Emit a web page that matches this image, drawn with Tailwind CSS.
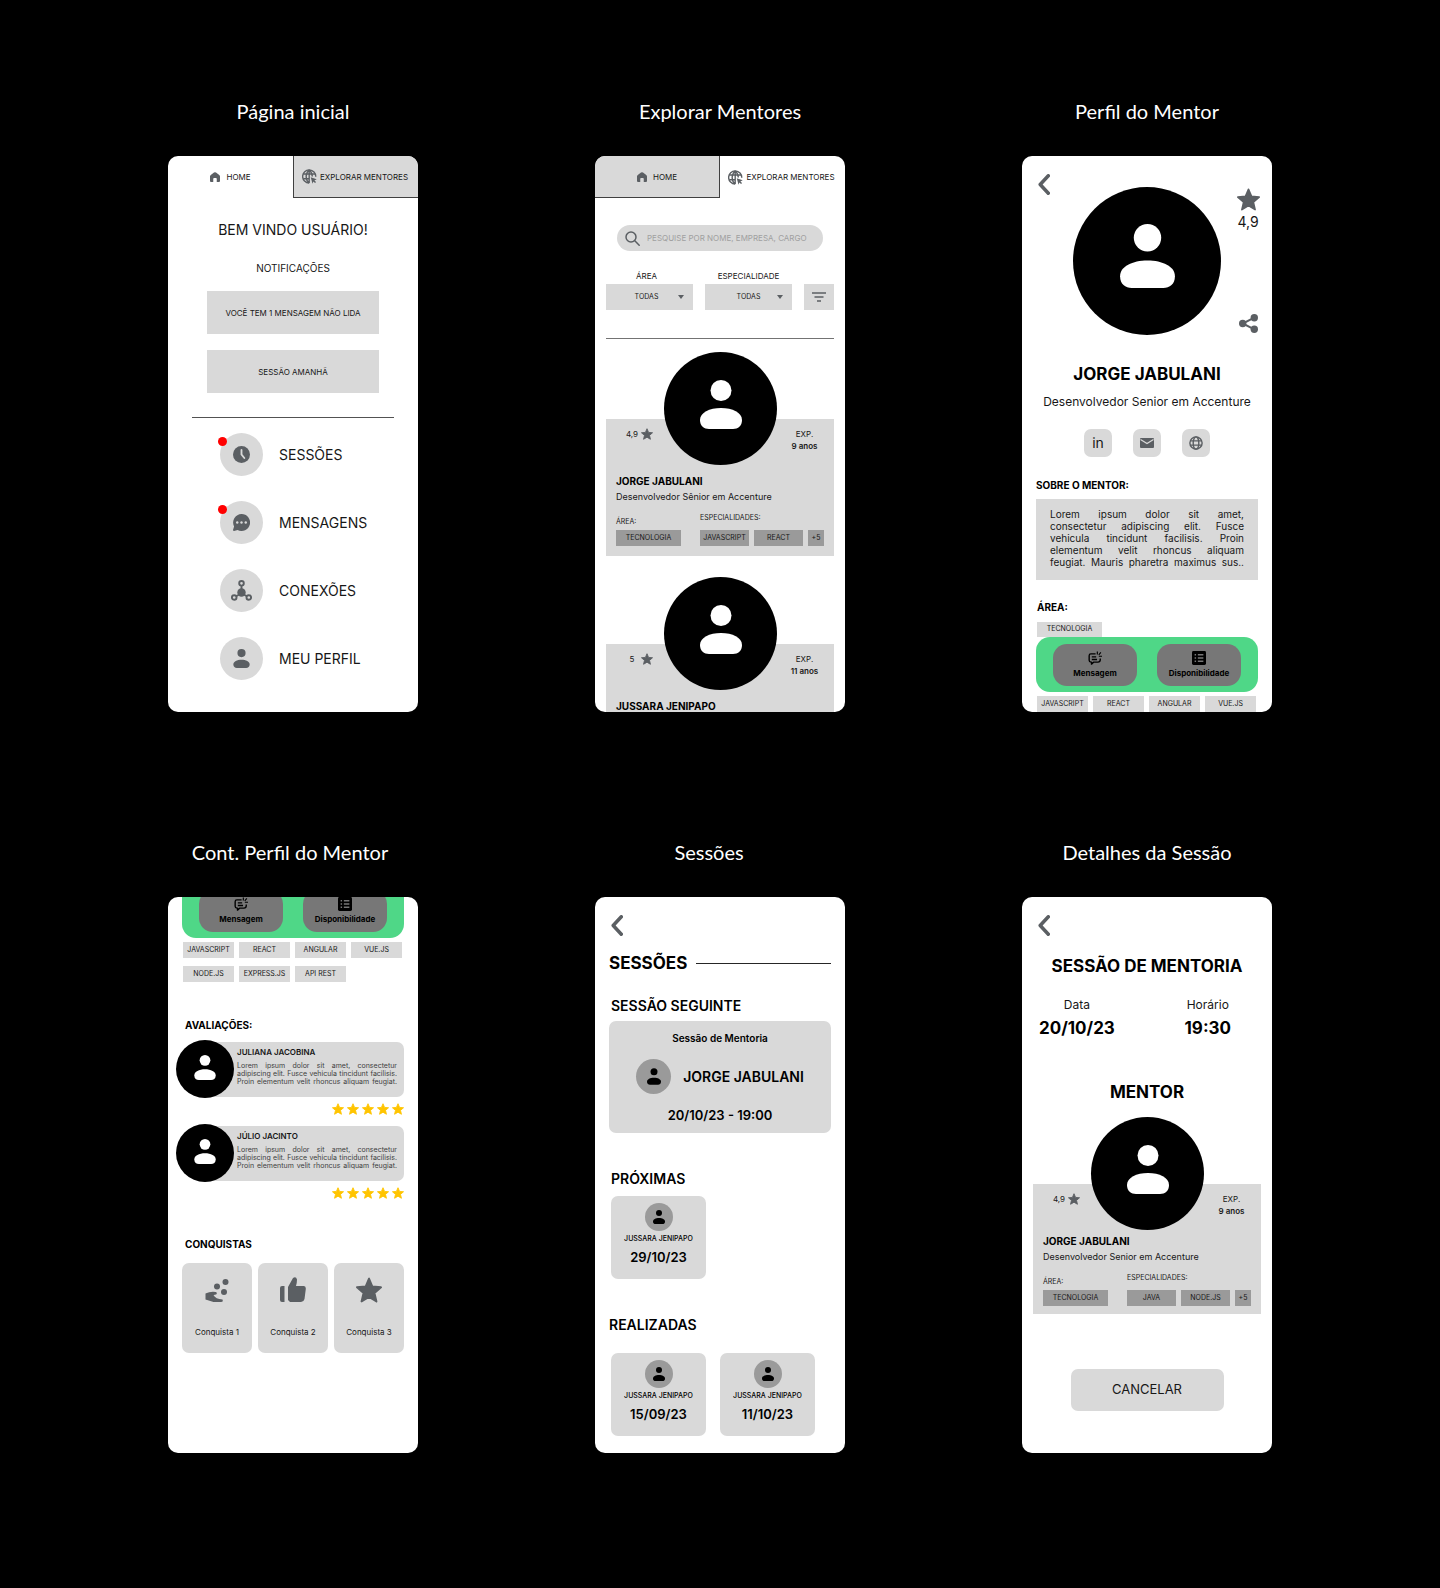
<!DOCTYPE html>
<html lang="pt-BR">
<head>
<meta charset="utf-8">
<meta name="viewport" content="width=device-width, initial-scale=1">
<title>Mentoria – Wireframes</title>
<script src="https://cdn.jsdelivr.net/npm/@tailwindcss/browser@4"></script>
</head>
<body class="bg-black font-['Inter',sans-serif] text-[8px] text-neutral-900">

<!-- Shared icons -->
<svg class="hidden" aria-hidden="true">
  <symbol id="person" viewBox="0 0 42 49"><circle cx="21" cy="10.5" r="10.5"/><path d="M0 40C0 32.5 9.5 28 21 28s21 4.500 21 12c0 6-4 9-9 9H9c-5 0-9-3-9-9z"/></symbol>
  <symbol id="star" viewBox="1.200 1.200 21.600 20.600"><path stroke="currentColor" stroke-width="1.600" stroke-linejoin="round" d="M12 17.270L18.180 21l-1.640-7.030L22 9.240l-7.190-.610L12 2 9.190 8.630 2 9.240l5.460 4.730L5.820 21z"/></symbol>
  <symbol id="chevron" viewBox="0 0 12 21"><path fill="none" stroke="currentColor" stroke-width="3.500" stroke-linecap="round" stroke-linejoin="round" d="M10.300 1.800L2.200 10.500l8.100 8.700"/></symbol>
  <symbol id="home" viewBox="0 0 20 20"><path d="M0 9Q0 7 1.500 6L8 1q2-1.500 4 0l6.500 5Q20 7 20 9v9q0 2-2 2h-4.500v-6q0-2-1.500-2H8q-1.500 0-1.500 2v6H2q-2 0-2-2z"/></symbol>
  <symbol id="globe-cursor" viewBox="0 0 24 24"><g fill="none" stroke="currentColor" stroke-width="2.200"><path d="M22 12.500A10.500 10.500 0 1 0 11.500 22.500"/><path d="M11.500 1.500C5 7 5 17 11.500 22.500M11.500 1.500c3.500 3 5 6.500 5 10.500M11.500 1.500v21M2 8h19M2 15.500h10"/></g><path d="M14 13l9.500 3.500-3.700 1.700 2.700 2.700-1.600 1.600-2.700-2.700-1.400 3.700z"/></symbol>
  <symbol id="globe" viewBox="0 0 24 24"><g fill="none" stroke="currentColor" stroke-width="2.400"><circle cx="12" cy="12" r="10.500"/><ellipse cx="12" cy="12" rx="4.800" ry="10.500"/><path d="M2 8.300h20M2 15.700h20"/></g></symbol>
  <symbol id="message" viewBox="0 0 24 24"><path fill="none" stroke="currentColor" stroke-width="2.400" stroke-linejoin="round" d="M13 5H5Q2 5 2 8v8q0 3 3 3h1v3.500L10 19h7q4 0 4-4v-2M6.500 10H14M6.500 14.500h9"/><path fill="none" stroke="currentColor" stroke-width="2" d="M16 6V1M18.500 6.500L22 2.500M18.500 9H24"/></symbol>
  <symbol id="list" viewBox="0 0 24 24"><rect width="24" height="24" rx="2.500"/><path stroke="#777" stroke-width="2.400" fill="none" d="M4.500 6.500H7M10 6.500h9.500M4.500 12H7M10 12h9.500M4.500 17.500H7M10 17.500h9.500"/></symbol>
</svg>

<main class="mx-auto grid max-w-[1281px] grid-cols-1 gap-y-[124px] pt-[95px] pb-[135px] md:grid-cols-2 lg:grid-cols-3">

  <!-- Página inicial -->
  <section class="flex flex-col items-center">
    <h1 class="font-['Lato',sans-serif] text-xl leading-8 text-white">Página inicial</h1>
    <div class="mt-[29px] flex h-[556px] w-[250px] flex-col overflow-hidden rounded-[10px] bg-white">
      <nav class="grid h-[42px] shrink-0 grid-cols-2">
        <a href="#" class="flex items-center justify-center gap-[6px]"><svg class="size-[10px] fill-[#5b5f63]"><use href="#home"/></svg>HOME</a>
        <a href="#" class="flex items-center justify-center gap-[3px] border-b border-l border-neutral-700 bg-[#d9d9d9] pr-[2px]"><svg class="size-[15px] fill-[#5b5f63] text-[#5b5f63]"><use href="#globe-cursor"/></svg>EXPLORAR MENTORES</a>
      </nav>
      <h2 class="mt-[22px] text-center text-sm leading-5">BEM VINDO USUÁRIO!</h2>
      <h3 class="mt-[21px] text-center text-[10px] leading-[14px]">NOTIFICAÇÕES</h3>
      <ul class="mx-[39px] mt-4 flex flex-col gap-4">
        <li class="flex h-[43px] items-center justify-center bg-[#d9d9d9]">VOCÊ TEM 1 MENSAGEM NÃO LIDA</li>
        <li class="flex h-[43px] items-center justify-center bg-[#d9d9d9]">SESSÃO AMANHÃ</li>
      </ul>
      <hr class="mx-6 mt-6 border-neutral-600">
      <ul class="mt-[15px] ml-[52px] flex flex-col gap-[25px] text-sm">
        <li><a href="#" class="flex items-center gap-4">
          <span class="relative flex size-[43px] items-center justify-center rounded-full bg-[#d9d9d9]">
            <svg viewBox="0 0 24 24" class="size-[17px]"><circle cx="12" cy="12" r="12" fill="#5b5f63"/><path d="M12 5.500V12l4 5" fill="none" stroke="#d9d9d9" stroke-width="2.600" stroke-linecap="round"/></svg>
            <span class="absolute top-1 -left-[2px] size-[9px] rounded-full bg-[#ff0000]"></span>
          </span>SESSÕES</a></li>
        <li><a href="#" class="flex items-center gap-4">
          <span class="relative flex size-[43px] items-center justify-center rounded-full bg-[#d9d9d9]">
            <svg viewBox="0 0 24 24" class="size-[17px]"><path fill="#5b5f63" d="M12 0a12 12 0 1 1-5.500 22.600L1.500 24Q0 24 0 22.500l1.500-5A12 12 0 0 1 12 0z"/><g fill="#d9d9d9"><circle cx="6" cy="12" r="1.700"/><circle cx="12" cy="12" r="1.700"/><circle cx="18" cy="12" r="1.700"/></g></svg>
            <span class="absolute top-1 -left-[2px] size-[9px] rounded-full bg-[#ff0000]"></span>
          </span>MENSAGENS</a></li>
        <li><a href="#" class="flex items-center gap-4">
          <span class="flex size-[43px] items-center justify-center rounded-full bg-[#d9d9d9]">
            <svg viewBox="0 0 21 21" class="size-[21px]"><circle cx="10.500" cy="12.500" r="4.200" fill="#5b5f63"/><g fill="none" stroke="#5b5f63" stroke-width="1.900"><circle cx="10.500" cy="3.300" r="2.300"/><circle cx="3.200" cy="17.500" r="2.300"/><circle cx="17.800" cy="17.500" r="2.300"/><path d="M10.500 5.500V10M5.200 16.300l3-1.800M15.800 16.300l-3-1.800"/></g></svg>
          </span>CONEXÕES</a></li>
        <li><a href="#" class="flex items-center gap-4">
          <span class="flex size-[43px] items-center justify-center rounded-full bg-[#d9d9d9]">
            <svg class="h-[19px] w-[17px] fill-[#5b5f63]"><use href="#person"/></svg>
          </span>MEU PERFIL</a></li>
      </ul>
    </div>
  </section>

  <!-- Explorar mentores -->
  <section class="flex flex-col items-center">
    <h1 class="font-['Lato',sans-serif] text-xl leading-8 text-white">Explorar Mentores</h1>
    <div class="mt-[29px] flex h-[556px] w-[250px] flex-col overflow-hidden rounded-[10px] bg-white">
      <nav class="grid h-[42px] shrink-0 grid-cols-2">
        <a href="#" class="flex items-center justify-center gap-[6px] border-r border-b border-neutral-700 bg-[#d9d9d9]"><svg class="size-[10px] fill-[#5b5f63]"><use href="#home"/></svg>HOME</a>
        <a href="#" class="flex items-center justify-center gap-[3px] pr-[2px]"><svg class="size-[15px] fill-[#5b5f63] text-[#5b5f63]"><use href="#globe-cursor"/></svg>EXPLORAR MENTORES</a>
      </nav>
      <label class="mx-[22px] mt-[27px] flex h-[26px] shrink-0 items-center gap-[7px] rounded-full bg-[#d9d9d9] pr-2 pl-2">
        <svg viewBox="0 0 15 15" class="size-[15px] shrink-0" fill="none" stroke="#5b5f63" stroke-width="1.500" stroke-linecap="round"><circle cx="6" cy="6" r="5"/><path d="M9.800 9.800l4.400 4.400"/></svg>
        <input type="text" aria-label="Pesquisar mentores" placeholder="PESQUISE POR NOME, EMPRESA, CARGO" class="w-full min-w-0 bg-transparent placeholder:text-[#a0a0a0]">
      </label>
      <form class="mx-[11px] mt-5 grid grid-cols-[87px_87px_30px] items-end gap-3">
        <div class="relative flex flex-col gap-[3px]">
          <label for="area" class="pr-[6px] text-center leading-[10px]">ÁREA</label>
          <select id="area" class="h-[26px] appearance-none bg-[#d9d9d9] pr-[6px] text-center text-[7px]"><option>TODAS</option></select>
          <svg viewBox="0 0 6 4" class="pointer-events-none absolute right-[9px] bottom-[11px] h-1 w-[6px] fill-[#5b5f63]"><path d="M0 0h6L3 4z"/></svg>
        </div>
        <div class="relative flex flex-col gap-[3px]">
          <label for="especialidade" class="text-center leading-[10px]">ESPECIALIDADE</label>
          <select id="especialidade" class="h-[26px] appearance-none bg-[#d9d9d9] text-center text-[7px]"><option>TODAS</option></select>
          <svg viewBox="0 0 6 4" class="pointer-events-none absolute right-[9px] bottom-[11px] h-1 w-[6px] fill-[#5b5f63]"><path d="M0 0h6L3 4z"/></svg>
        </div>
        <button type="button" aria-label="Filtrar" class="flex h-[26px] items-center justify-center bg-[#d9d9d9]"><svg viewBox="0 0 14 10" class="h-[10px] w-[14px]" stroke="#5b5f63" stroke-width="1.300"><path d="M0 1h14M2.500 5h9M5 9h4"/></svg></button>
      </form>
      <hr class="mx-[11px] mt-7 border-neutral-500">

      <article class="mx-[11px] mt-[80px] bg-[#d9d9d9] px-[10px] pb-[10px]">
        <div class="-mx-[10px] grid grid-cols-[58px_113px_57px] items-start">
          <p class="flex items-center justify-end gap-[2px] pt-[9px] pr-[11px] leading-3"><span class="w-[14px] text-center">4,9</span><svg class="size-3 fill-[#5b5f63] text-[#5b5f63]"><use href="#star"/></svg></p>
          <div class="-mt-[67px] flex size-[113px] items-center justify-center rounded-full bg-black pb-2"><svg class="h-[49px] w-[42px] fill-white"><use href="#person"/></svg></div>
          <p class="pt-[9px] pr-[2px] text-center leading-3">EXP.<br><b class="font-semibold">9 anos</b></p>
        </div>
        <h2 class="mt-[9px] text-[10px] leading-[14px] font-bold text-black">JORGE JABULANI</h2>
        <p class="mt-[2px] text-[9px] leading-[13px]">Desenvolvedor Sênior em Accenture</p>
        <div class="mt-[11px] flex items-end justify-between text-[7px] leading-[8px]">
          <div><h3>ÁREA:</h3><p class="mt-1 flex h-4 w-[65px] items-center justify-center bg-[#9a9a9a]">TECNOLOGIA</p></div>
          <div><h3>ESPECIALIDADES:</h3>
            <ul class="mt-2 flex gap-[5px]"><li class="flex h-4 w-[49px] items-center justify-center bg-[#9a9a9a]">JAVASCRIPT</li><li class="flex h-4 w-[49px] items-center justify-center bg-[#9a9a9a]">REACT</li><li class="flex h-4 w-4 items-center justify-center bg-[#9a9a9a]">+5</li></ul></div>
        </div>
      </article>

      <article class="mx-[11px] mt-[88px] bg-[#d9d9d9] px-[10px] pb-[10px]">
        <div class="-mx-[10px] grid grid-cols-[58px_113px_57px] items-start">
          <p class="flex items-center justify-end gap-[2px] pt-[9px] pr-[11px] leading-3"><span class="w-[14px] text-center">5</span><svg class="size-3 fill-[#5b5f63] text-[#5b5f63]"><use href="#star"/></svg></p>
          <div class="-mt-[67px] flex size-[113px] items-center justify-center rounded-full bg-black pb-2"><svg class="h-[49px] w-[42px] fill-white"><use href="#person"/></svg></div>
          <p class="pt-[9px] pr-[2px] text-center leading-3">EXP.<br><b class="font-semibold">11 anos</b></p>
        </div>
        <h2 class="mt-[9px] text-[10px] leading-[14px] font-bold text-black">JUSSARA JENIPAPO</h2>
      </article>
    </div>
  </section>

  <!-- Perfil do mentor -->
  <section class="flex flex-col items-center">
    <h1 class="font-['Lato',sans-serif] text-xl leading-8 text-white">Perfil do Mentor</h1>
    <div class="mt-[29px] flex h-[556px] w-[250px] flex-col overflow-hidden rounded-[10px] bg-white">
      <header class="grid grid-cols-[51px_148px_51px] text-[#5b5f63]">
        <button type="button" aria-label="Voltar" class="mt-[18px] ml-4 h-[21px] w-3"><svg class="h-[21px] w-3"><use href="#chevron"/></svg></button>
        <div class="mt-[31px] flex size-[148px] items-center justify-center rounded-full bg-black pb-[10px]"><svg class="h-[64px] w-[55px] fill-white"><use href="#person"/></svg></div>
        <div class="flex flex-col items-center pt-8 pb-[2px] pl-[3px]">
          <svg class="size-[23px] fill-[#5b5f63]"><use href="#star"/></svg>
          <p class="mt-[3px] text-sm leading-4 text-neutral-900">4,9</p>
          <button type="button" aria-label="Compartilhar" class="mt-auto"><svg viewBox="0 0 19 19" class="size-[19px] fill-[#5b5f63]" stroke="#5b5f63"><path stroke-width="2" fill="none" d="M15.300 3.700l-11.600 5.800 11.600 5.800"/><g stroke="none"><circle cx="15.300" cy="3.700" r="3.700"/><circle cx="3.700" cy="9.500" r="3.700"/><circle cx="15.300" cy="15.300" r="3.700"/></g></svg></button>
        </div>
      </header>
      <h2 class="mt-[29px] text-center text-[17px] leading-5 font-bold text-black">JORGE JABULANI</h2>
      <p class="mt-[10px] text-center text-xs leading-4">Desenvolvedor Senior em Accenture</p>
      <nav class="mt-[19px] flex justify-center gap-[21px]">
        <a href="#" aria-label="LinkedIn" class="flex size-7 items-center justify-center rounded-[7px] bg-[#d9d9d9] text-sm">in</a>
        <a href="#" aria-label="E-mail" class="flex size-7 items-center justify-center rounded-[7px] bg-[#d9d9d9]"><svg viewBox="0 0 14 10" class="h-[10px] w-[14px]"><rect width="14" height="10" rx="1" fill="#5b5f63"/><path d="M.5 1.500L7 5.500l6.500-4" fill="none" stroke="#d9d9d9" stroke-width="1.200"/></svg></a>
        <a href="#" aria-label="Site" class="flex size-7 items-center justify-center rounded-[7px] bg-[#d9d9d9] text-[#5b5f63]"><svg class="size-[14px]"><use href="#globe"/></svg></a>
      </nav>
      <h3 class="mt-[21px] ml-[14px] text-[10px] leading-[14px] font-bold text-black">SOBRE O MENTOR:</h3>
      <p class="mx-[14px] mt-[7px] bg-[#d9d9d9] px-[14px] pt-[9px] pb-3 text-justify text-[10px] leading-3 [text-align-last:justify]">Lorem ipsum dolor sit amet,<br>consectetur adipiscing elit. Fusce<br>vehicula tincidunt facilisis. Proin<br>elementum velit rhoncus aliquam<br>feugiat. Mauris pharetra maximus sus..</p>
      <h3 class="mt-5 ml-[15px] text-[10px] leading-[14px] font-bold text-black">ÁREA:</h3>
      <p class="mt-2 ml-[15px] flex h-[15px] w-[65px] shrink-0 items-center justify-center bg-[#d9d9d9] text-[7px]">TECNOLOGIA</p>
      <div class="mx-[14px] flex h-[55px] shrink-0 items-center justify-center gap-5 rounded-[14px] bg-[#4fd787] font-bold text-black">
        <button type="button" class="flex h-[42px] w-[84px] flex-col items-center gap-[3px] rounded-[14px] bg-[#777] pt-[7px] leading-[10px]"><svg class="size-[14px]"><use href="#message"/></svg>Mensagem</button>
        <button type="button" class="flex h-[42px] w-[84px] flex-col items-center gap-[3px] rounded-[14px] bg-[#777] pt-[7px] leading-[10px]"><svg class="size-[14px]"><use href="#list"/></svg>Disponibilidade</button>
      </div>
      <ul class="mx-[15px] mt-1 flex gap-[5px] text-[7px]">
        <li class="flex h-4 w-[51px] items-center justify-center bg-[#d9d9d9]">JAVASCRIPT</li>
        <li class="flex h-4 w-[51px] items-center justify-center bg-[#d9d9d9]">REACT</li>
        <li class="flex h-4 w-[51px] items-center justify-center bg-[#d9d9d9]">ANGULAR</li>
        <li class="flex h-4 w-[51px] items-center justify-center bg-[#d9d9d9]">VUE.JS</li>
      </ul>
    </div>
  </section>

  <!-- Continuação do perfil -->
  <section class="flex flex-col items-center">
    <h1 class="pr-[6px] font-['Lato',sans-serif] text-xl leading-8 text-white">Cont. Perfil do Mentor</h1>
    <div class="mt-[29px] flex h-[556px] w-[250px] flex-col overflow-hidden rounded-[10px] bg-white">
      <div class="mx-[14px] -mt-[14px] flex h-[55px] shrink-0 items-center justify-center gap-5 rounded-[14px] bg-[#4fd787] font-bold text-black">
        <button type="button" class="flex h-[42px] w-[84px] flex-col items-center gap-[3px] rounded-[14px] bg-[#777] pt-[7px] leading-[10px]"><svg class="size-[14px]"><use href="#message"/></svg>Mensagem</button>
        <button type="button" class="flex h-[42px] w-[84px] flex-col items-center gap-[3px] rounded-[14px] bg-[#777] pt-[7px] leading-[10px]"><svg class="size-[14px]"><use href="#list"/></svg>Disponibilidade</button>
      </div>
      <ul class="mx-[15px] mt-1 flex flex-wrap gap-x-[5px] gap-y-2 text-[7px]">
        <li class="flex h-4 w-[51px] items-center justify-center bg-[#d9d9d9]">JAVASCRIPT</li>
        <li class="flex h-4 w-[51px] items-center justify-center bg-[#d9d9d9]">REACT</li>
        <li class="flex h-4 w-[51px] items-center justify-center bg-[#d9d9d9]">ANGULAR</li>
        <li class="flex h-4 w-[51px] items-center justify-center bg-[#d9d9d9]">VUE.JS</li>
        <li class="flex h-4 w-[51px] items-center justify-center bg-[#d9d9d9]">NODE.JS</li>
        <li class="flex h-4 w-[51px] items-center justify-center bg-[#d9d9d9]">EXPRESS.JS</li>
        <li class="flex h-4 w-[51px] items-center justify-center bg-[#d9d9d9]">API REST</li>
      </ul>
      <h2 class="mt-9 ml-[17px] text-[10px] leading-[14px] font-bold text-black">AVALIAÇÕES:</h2>
      <ul class="mt-2 mr-[14px] ml-2 flex flex-col gap-[9px]">
        <li>
          <div class="flex items-center">
            <div class="z-10 flex size-[58px] shrink-0 items-center justify-center rounded-full bg-black pb-1"><svg class="h-[25px] w-[22px] fill-white"><use href="#person"/></svg></div>
            <div class="-ml-[29px] h-[55px] grow rounded-[7px] bg-[#d9d9d9] pt-[5px] pr-[7px] pl-8">
              <h3 class="leading-[10px] font-semibold">JULIANA JACOBINA</h3>
              <p class="mt-[5px] text-[7px] leading-[8px] text-neutral-700 [text-align-last:justify]">Lorem ipsum dolor sit amet, consectetur<br>adipiscing elit. Fusce vehicula tincidunt facilisis.<br>Proin elementum velit rhoncus aliquam feugiat.</p>
            </div>
          </div>
          <div role="img" aria-label="5 estrelas" class="mt-[5px] flex justify-end gap-[3px] fill-[#ffc400] text-[#ffc400]"><svg class="size-3"><use href="#star"/></svg><svg class="size-3"><use href="#star"/></svg><svg class="size-3"><use href="#star"/></svg><svg class="size-3"><use href="#star"/></svg><svg class="size-3"><use href="#star"/></svg></div>
        </li>
        <li>
          <div class="flex items-center">
            <div class="z-10 flex size-[58px] shrink-0 items-center justify-center rounded-full bg-black pb-1"><svg class="h-[25px] w-[22px] fill-white"><use href="#person"/></svg></div>
            <div class="-ml-[29px] h-[55px] grow rounded-[7px] bg-[#d9d9d9] pt-[5px] pr-[7px] pl-8">
              <h3 class="leading-[10px] font-semibold">JÚLIO JACINTO</h3>
              <p class="mt-[5px] text-[7px] leading-[8px] text-neutral-700 [text-align-last:justify]">Lorem ipsum dolor sit amet, consectetur<br>adipiscing elit. Fusce vehicula tincidunt facilisis.<br>Proin elementum velit rhoncus aliquam feugiat.</p>
            </div>
          </div>
          <div role="img" aria-label="5 estrelas" class="mt-[5px] flex justify-end gap-[3px] fill-[#ffc400] text-[#ffc400]"><svg class="size-3"><use href="#star"/></svg><svg class="size-3"><use href="#star"/></svg><svg class="size-3"><use href="#star"/></svg><svg class="size-3"><use href="#star"/></svg><svg class="size-3"><use href="#star"/></svg></div>
        </li>
      </ul>
      <h2 class="mt-[38px] ml-[17px] text-[10px] leading-[14px] font-bold text-black">CONQUISTAS</h2>
      <ul class="mx-[14px] mt-3 grid grid-cols-3 gap-[6px] leading-[10px]">
        <li class="flex h-[90px] flex-col items-center rounded-[7px] bg-[#d9d9d9] pt-[14px]"><svg viewBox="0 0 23 23" class="my-[2px] h-[23px] w-[26px] fill-[#5b5f63]"><circle cx="20" cy="3" r="3"/><circle cx="11.500" cy="7.500" r="3"/><circle cx="18.500" cy="13" r="3"/><path d="M0 14.500Q5 12 10.500 13q1.500 1 .5 2.200Q9.500 16 8 16q2 4 9 4.500 1 2.500-1.500 2.500H8l-8-2.500z"/></svg><span class="mt-[23px]">Conquista 1</span></li>
        <li class="flex h-[90px] flex-col items-center rounded-[7px] bg-[#d9d9d9] pt-[14px]"><svg viewBox="0 0 26 26" class="size-[26px] fill-[#5b5f63]"><path d="M2 9h2.500v16H2q-2 0-2-2V11q0-2 2-2zM8 10l5-9q3-2 4 1.500 0 3-1 6.500h8q2 .5 1.800 3l-1.300 10q-.5 2.700-3.500 3H10l-2-2z"/></svg><span class="mt-[24px]">Conquista 2</span></li>
        <li class="flex h-[90px] flex-col items-center rounded-[7px] bg-[#d9d9d9] pt-[14px]"><svg class="size-[26px] fill-[#5b5f63] text-[#5b5f63]"><use href="#star"/></svg><span class="mt-[24px]">Conquista 3</span></li>
      </ul>
    </div>
  </section>

  <!-- Sessões -->
  <section class="flex flex-col items-center">
    <h1 class="pr-[22px] font-['Lato',sans-serif] text-xl leading-8 text-white">Sessões</h1>
    <div class="mt-[29px] flex h-[556px] w-[250px] flex-col overflow-hidden rounded-[10px] bg-white px-[14px] text-black">
      <button type="button" aria-label="Voltar" class="mt-[18px] ml-[2px] h-[21px] w-3 text-[#5b5f63]"><svg class="h-[21px] w-3"><use href="#chevron"/></svg></button>
      <div class="mt-[17px] flex items-center gap-[9px]"><h2 class="text-[17px] leading-5 font-bold">SESSÕES</h2><hr class="grow border-neutral-800"></div>
      <h3 class="mt-[25px] ml-[2px] text-sm leading-4 font-semibold">SESSÃO SEGUINTE</h3>
      <article class="mt-[7px] flex flex-col items-center rounded-[7px] bg-[#d9d9d9] py-[10px] font-semibold">
        <h4 class="text-[10px] leading-[14px]">Sessão de Mentoria</h4>
        <div class="mt-[14px] flex items-center gap-3 text-sm"><span class="flex size-[35px] items-center justify-center rounded-full bg-[#9a9a9a]"><svg class="h-[17px] w-[14px]"><use href="#person"/></svg></span>JORGE JABULANI</div>
        <time class="mt-[13px] text-[13px] leading-4">20/10/23 - 19:00</time>
      </article>
      <h3 class="mt-[38px] ml-[2px] text-sm leading-4 font-semibold">PRÓXIMAS</h3>
      <ul class="mt-[9px] ml-[2px] flex gap-[14px]">
        <li class="flex h-[83px] w-[95px] flex-col items-center rounded-[7px] bg-[#d9d9d9] pt-[7px]"><span class="flex size-7 items-center justify-center rounded-full bg-[#9a9a9a]"><svg class="h-[14px] w-3"><use href="#person"/></svg></span><p class="mt-1 text-[7px] leading-[8px] font-medium">JUSSARA JENIPAPO</p><time class="mt-[6px] text-[13px] leading-4 font-semibold">29/10/23</time></li>
      </ul>
      <h3 class="mt-[38px] text-sm leading-4 font-semibold">REALIZADAS</h3>
      <ul class="mt-5 ml-[2px] flex gap-[14px]">
        <li class="flex h-[83px] w-[95px] flex-col items-center rounded-[7px] bg-[#d9d9d9] pt-[7px]"><span class="flex size-7 items-center justify-center rounded-full bg-[#9a9a9a]"><svg class="h-[14px] w-3"><use href="#person"/></svg></span><p class="mt-1 text-[7px] leading-[8px] font-medium">JUSSARA JENIPAPO</p><time class="mt-[6px] text-[13px] leading-4 font-semibold">15/09/23</time></li>
        <li class="flex h-[83px] w-[95px] flex-col items-center rounded-[7px] bg-[#d9d9d9] pt-[7px]"><span class="flex size-7 items-center justify-center rounded-full bg-[#9a9a9a]"><svg class="h-[14px] w-3"><use href="#person"/></svg></span><p class="mt-1 text-[7px] leading-[8px] font-medium">JUSSARA JENIPAPO</p><time class="mt-[6px] text-[13px] leading-4 font-semibold">11/10/23</time></li>
      </ul>
    </div>
  </section>

  <!-- Detalhes da sessão -->
  <section class="flex flex-col items-center">
    <h1 class="font-['Lato',sans-serif] text-xl leading-8 text-white">Detalhes da Sessão</h1>
    <div class="mt-[29px] flex h-[556px] w-[250px] flex-col overflow-hidden rounded-[10px] bg-white">
      <button type="button" aria-label="Voltar" class="mt-[18px] ml-4 h-[21px] w-3 text-[#5b5f63]"><svg class="h-[21px] w-3"><use href="#chevron"/></svg></button>
      <h2 class="mt-5 text-center text-[17px] leading-5 font-bold text-black">SESSÃO DE MENTORIA</h2>
      <dl class="mt-[21px] flex justify-between pr-[41px] pl-[17px] text-center">
        <div><dt class="text-xs leading-4">Data</dt><dd class="mt-[5px] text-[17px] leading-5 font-bold text-black">20/10/23</dd></div>
        <div><dt class="text-xs leading-4">Horário</dt><dd class="mt-[5px] text-[17px] leading-5 font-bold text-black">19:30</dd></div>
      </dl>
      <h2 class="mt-11 text-center text-[17px] leading-5 font-bold text-black">MENTOR</h2>
      <article class="mx-[11px] mt-[82px] bg-[#d9d9d9] px-[10px] pb-2">
        <div class="-mx-[10px] grid grid-cols-[58px_113px_57px] items-start">
          <p class="flex items-center justify-end gap-[2px] pt-[9px] pr-[11px] leading-3"><span class="w-[14px] text-center">4,9</span><svg class="size-3 fill-[#5b5f63] text-[#5b5f63]"><use href="#star"/></svg></p>
          <div class="-mt-[67px] flex size-[113px] items-center justify-center rounded-full bg-black pb-2"><svg class="h-[49px] w-[42px] fill-white"><use href="#person"/></svg></div>
          <p class="pt-[9px] pr-[2px] text-center leading-3">EXP.<br><b class="font-semibold">9 anos</b></p>
        </div>
        <h3 class="mt-1 text-[10px] leading-[14px] font-bold text-black">JORGE JABULANI</h3>
        <p class="mt-[2px] text-[9px] leading-[13px]">Desenvolvedor Senior em Accenture</p>
        <div class="mt-[11px] flex items-end justify-between text-[7px] leading-[8px]">
          <div><h4>ÁREA:</h4><p class="mt-1 flex h-4 w-[65px] items-center justify-center bg-[#9a9a9a]">TECNOLOGIA</p></div>
          <div><h4>ESPECIALIDADES:</h4>
            <ul class="mt-2 flex gap-[5px]"><li class="flex h-4 w-[49px] items-center justify-center bg-[#9a9a9a]">JAVA</li><li class="flex h-4 w-[49px] items-center justify-center bg-[#9a9a9a]">NODE.JS</li><li class="flex h-4 w-4 items-center justify-center bg-[#9a9a9a]">+5</li></ul></div>
        </div>
      </article>
      <button type="button" class="mx-auto mt-[55px] h-[42px] w-[153px] shrink-0 rounded-[7px] bg-[#d9d9d9] text-[13px]">CANCELAR</button>
    </div>
  </section>
</main>
</body>
</html>
